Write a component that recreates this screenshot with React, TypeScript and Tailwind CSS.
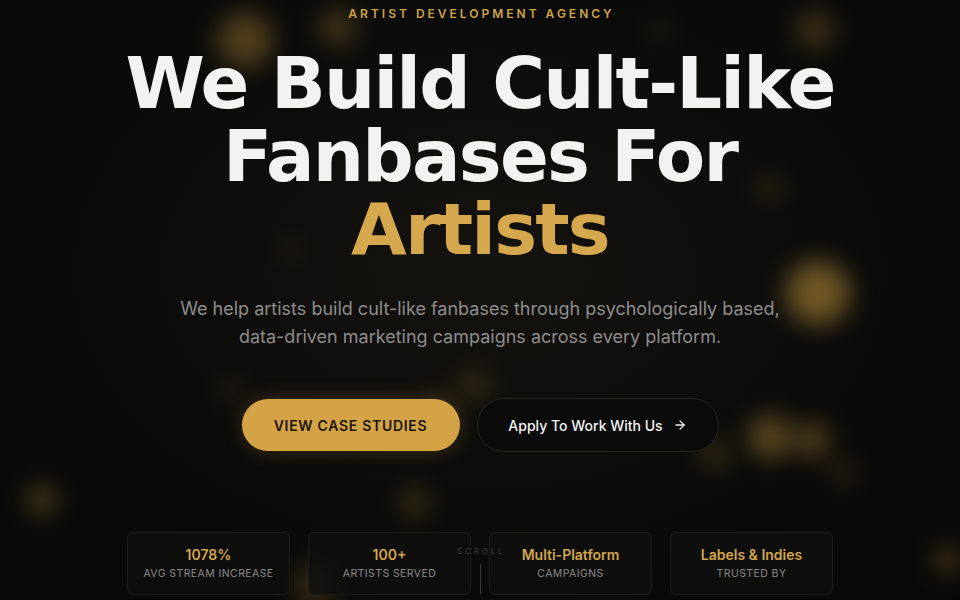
import React from "react";

const blobs: { x: number; y: number; s: number; o: number }[] = [
  { x: 245, y: 40, s: 56, o: 0.35 },
  { x: 338, y: 27, s: 36, o: 0.3 },
  { x: 815, y: 30, s: 40, o: 0.25 },
  { x: 770, y: 188, s: 18, o: 0.35 },
  { x: 818, y: 293, s: 64, o: 0.5 },
  { x: 232, y: 390, s: 14, o: 0.35 },
  { x: 474, y: 385, s: 24, o: 0.3 },
  { x: 443, y: 400, s: 14, o: 0.3 },
  { x: 770, y: 437, s: 44, o: 0.4 },
  { x: 812, y: 440, s: 36, o: 0.35 },
  { x: 715, y: 455, s: 28, o: 0.25 },
  { x: 843, y: 472, s: 20, o: 0.3 },
  { x: 42, y: 500, s: 30, o: 0.35 },
  { x: 415, y: 503, s: 26, o: 0.3 },
  { x: 948, y: 560, s: 26, o: 0.35 },
  { x: 315, y: 585, s: 40, o: 0.25 },
  { x: 660, y: 30, s: 20, o: 0.15 },
  { x: 290, y: 250, s: 14, o: 0.2 },
];

const stats = [
  { v: "1078%", l: "AVG STREAM INCREASE" },
  { v: "100+", l: "ARTISTS SERVED" },
  { v: "Multi-Platform", l: "CAMPAIGNS" },
  { v: "Labels & Indies", l: "TRUSTED BY" },
];

export default function App() {
  return (
    <div
      className="relative w-[960px] h-[600px] overflow-hidden bg-[#0a0a0a]"
      style={{ fontFamily: "Inter, 'Noto Sans', sans-serif" }}
    >
      <div className="absolute inset-0 bg-[radial-gradient(ellipse_at_50%_45%,#15130f_0%,#0b0b0a_55%,#080808_100%)]" />
      {blobs.map((b, i) => (
        <div
          key={i}
          className="absolute rounded-full bg-[#d4a340] blur-[13px]"
          style={{
            left: b.x - b.s / 2,
            top: b.y - b.s / 2,
            width: b.s,
            height: b.s,
            opacity: b.o,
          }}
        />
      ))}

      <div className="relative flex flex-col items-center">
        <div className="mt-[6px] text-[12px] leading-[16px] font-semibold tracking-[0.25em] text-[#cfa349] pl-[0.25em]">
          ARTIST DEVELOPMENT AGENCY
        </div>
        <h1
          className="mt-[25px] text-center text-[72px] leading-[73px] font-bold tracking-[-0.025em] text-[#f2f2f2]"
          style={{ fontFamily: "'DejaVu Sans', sans-serif" }}
        >
          We Build Cult-Like
          <br />
          Fanbases For
          <br />
          <span className="text-[#d6a84e]">Artists</span>
        </h1>
        <p className="mt-[29px] text-center text-[18px] leading-[28px] text-[#8d8d8d]">
          We help artists build cult-like fanbases through psychologically based,
          <br />
          data-driven marketing campaigns across every platform.
        </p>
        <div className="mt-[47px] flex items-center gap-[17px]">
          <button className="h-[52px] w-[218px] rounded-full bg-[#d4a345] text-[14px] font-semibold tracking-[0.05em] text-[#1b1409] shadow-[0_0_20px_rgba(212,163,69,0.25)]">
            VIEW CASE STUDIES
          </button>
          <button className="h-[54px] w-[242px] rounded-full border border-[#262626] bg-[#0b0b0b] text-[14px] font-medium text-[#f2f2f2] flex items-center justify-center gap-[10px]">
            Apply To Work With Us
            <svg width="14" height="14" viewBox="0 0 24 24" fill="none" stroke="currentColor" strokeWidth="2.2" strokeLinecap="round" strokeLinejoin="round">
              <path d="M5 12h14" />
              <path d="M12 5l7 7-7 7" />
            </svg>
          </button>
        </div>
        <div className="mt-[80px] flex gap-[18px]">
          {stats.map((s) => (
            <div
              key={s.l}
              className="w-[163px] h-[63px] rounded-[6px] border border-[#1c1c1c] bg-[#0f0f0f]/80 flex flex-col items-center justify-center"
            >
              <div className="text-[14px] leading-[18px] font-semibold text-[#d2a64b]">{s.v}</div>
              <div className="mt-[3px] text-[10.5px] leading-[14px] tracking-[0.04em] text-[#8a8a8a]">{s.l}</div>
            </div>
          ))}
        </div>
      </div>

      <div className="absolute left-[454px] top-[546px] flex flex-col items-center w-[52px]">
        <div className="text-[8px] leading-[10px] tracking-[0.35em] text-[#3d3d3d] pl-[0.35em]">SCROLL</div>
        <div className="mt-[8px] w-px h-[30px] bg-[#3a3a3a]" />
      </div>
    </div>
  );
}
